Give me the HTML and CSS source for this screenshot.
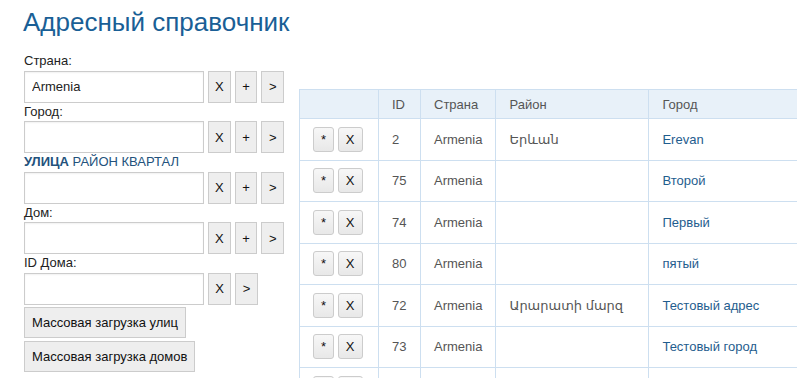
FILE: index.html
```html
<!DOCTYPE html>
<html lang="ru">
<head>
    <meta charset="UTF-8">
    <meta name="viewport" content="width=device-width, initial-scale=1.0">
    <title>Адресный справочник</title>
    <link rel="stylesheet" href="styles.css">
</head>
<body>
    <h1 class="page-title">Адресный справочник</h1>
    <div class="page">
        <div class="filters">
            <div class="field-label">Страна:</div>
            <div class="field-row">
                <input class="field-input" type="text" value="Armenia">
                <button class="sq-btn">X</button>
                <button class="sq-btn">+</button>
                <button class="sq-btn">&gt;</button>
            </div>

            <div class="field-label">Город:</div>
            <div class="field-row">
                <input class="field-input" type="text">
                <button class="sq-btn">X</button>
                <button class="sq-btn">+</button>
                <button class="sq-btn">&gt;</button>
            </div>

            <div class="field-label type-links">
                <a href="#" class="active">УЛИЦА</a> <a href="#">РАЙОН</a> <a href="#">КВАРТАЛ</a>
            </div>
            <div class="field-row">
                <input class="field-input" type="text">
                <button class="sq-btn">X</button>
                <button class="sq-btn">+</button>
                <button class="sq-btn">&gt;</button>
            </div>

            <div class="field-label">Дом:</div>
            <div class="field-row">
                <input class="field-input" type="text">
                <button class="sq-btn">X</button>
                <button class="sq-btn">+</button>
                <button class="sq-btn">&gt;</button>
            </div>

            <div class="field-label">ID Дома:</div>
            <div class="field-row">
                <input class="field-input" type="text">
                <button class="sq-btn">X</button>
                <button class="sq-btn">&gt;</button>
            </div>

            <button class="wide-btn first">Массовая загрузка улиц</button>
            <button class="wide-btn">Массовая загрузка домов</button>
        </div>

        <div class="results">
            <table class="addr-table">
                <thead>
                    <tr>
                        <th class="col-actions"></th>
                        <th class="col-id">ID</th>
                        <th class="col-country">Страна</th>
                        <th class="col-district">Район</th>
                        <th class="col-city">Город</th>
                    </tr>
                </thead>
                <tbody>
                    <tr>
                        <td><button class="row-btn star">*</button> <button class="row-btn">X</button></td>
                        <td>2</td>
                        <td>Armenia</td>
                        <td>Երևան</td>
                        <td class="city">Erevan</td>
                    </tr>
                    <tr>
                        <td><button class="row-btn star">*</button> <button class="row-btn">X</button></td>
                        <td>75</td>
                        <td>Armenia</td>
                        <td></td>
                        <td class="city">Второй</td>
                    </tr>
                    <tr>
                        <td><button class="row-btn star">*</button> <button class="row-btn">X</button></td>
                        <td>74</td>
                        <td>Armenia</td>
                        <td></td>
                        <td class="city">Первый</td>
                    </tr>
                    <tr>
                        <td><button class="row-btn star">*</button> <button class="row-btn">X</button></td>
                        <td>80</td>
                        <td>Armenia</td>
                        <td></td>
                        <td class="city">пятый</td>
                    </tr>
                    <tr>
                        <td><button class="row-btn star">*</button> <button class="row-btn">X</button></td>
                        <td>72</td>
                        <td>Armenia</td>
                        <td>Արարատի մարզ</td>
                        <td class="city">Тестовый адрес</td>
                    </tr>
                    <tr>
                        <td><button class="row-btn star">*</button> <button class="row-btn">X</button></td>
                        <td>73</td>
                        <td>Armenia</td>
                        <td></td>
                        <td class="city">Тестовый город</td>
                    </tr>
                    <tr>
                        <td><button class="row-btn star">*</button> <button class="row-btn">X</button></td>
                        <td>76</td>
                        <td>Armenia</td>
                        <td></td>
                        <td class="city">Третий</td>
                    </tr>
                </tbody>
            </table>
        </div>
    </div>
</body>
</html>
```

FILE: styles.css
```css
html, body {
    margin: 0;
    padding: 0;
    overflow: hidden;
}
body {
    font-family: "Liberation Sans", Arial, "DejaVu Sans", sans-serif;
    font-size: 13px;
    color: #222;
    background: #fff;
    width: 797px;
    height: 378px;
}
.page-title {
    margin: 0 0 14px 23px;
    padding-top: 6px;
    font-size: 26px;
    line-height: 32px;
    font-weight: normal;
    color: #1a5f96;
}
.page {
    display: flex;
    gap: 15px;
    padding-left: 24px;
}
.filters {
    width: 260px;
    flex-shrink: 0;
}
.field-label {
    height: 18.5px;
    line-height: 18px;
}
.type-links a {
    color: #23527c;
    text-decoration: none;
}
.type-links a.active {
    font-weight: bold;
}
.field-row {
    display: flex;
    gap: 4px;
    height: 32px;
}
.field-input {
    box-sizing: border-box;
    width: 180px;
    height: 32px;
    margin: 0;
    padding: 0 7px;
    border: 1px solid #ccc;
    box-shadow: inset 0 1px 2px rgba(0, 0, 0, 0.06);
    font-family: inherit;
    font-size: 13px;
    color: #222;
}
.sq-btn {
    box-sizing: border-box;
    width: 23px;
    height: 32px;
    margin: 0;
    padding: 0;
    border: 1px solid #ccc;
    background: #eee;
    font-family: inherit;
    font-size: 13px;
    color: #111;
}
.wide-btn {
    display: block;
    box-sizing: border-box;
    height: 31px;
    margin-top: 3px;
    padding: 0 7px;
    border: 1px solid #ccc;
    background: #eee;
    font-family: inherit;
    font-size: 13px;
    color: #111;
}
.wide-btn.first {
    margin-top: 2px;
}
.results {
    margin-top: 37px;
    flex-shrink: 0;
}
.addr-table {
    border-collapse: collapse;
    font-size: 13px;
    color: #555;
}
.addr-table th,
.addr-table td {
    border: 1px solid #cddff0;
    text-align: left;
    padding: 0 13px;
    white-space: nowrap;
}
.addr-table th {
    background: #e8f1f9;
    font-weight: normal;
    height: 28px;
    color: #555;
}
.addr-table td {
    height: 40.5px;
}
.col-actions { width: 52px; }
.col-id { width: 15px; }
.col-country { width: 48px; }
.col-district { width: 126px; }
.col-city { width: 200px; }
.addr-table td.city {
    color: #1f5d8e;
}
.row-btn {
    box-sizing: border-box;
    width: 25px;
    height: 25px;
    margin: 0;
    padding: 0;
    border: 1px solid #ccc;
    border-radius: 3px;
    background: linear-gradient(#f7f7f7, #e8e8e8);
    font-family: inherit;
    font-size: 13px;
    color: #111;
    vertical-align: middle;
}
.row-btn.star {
    width: 21px;
}
```
